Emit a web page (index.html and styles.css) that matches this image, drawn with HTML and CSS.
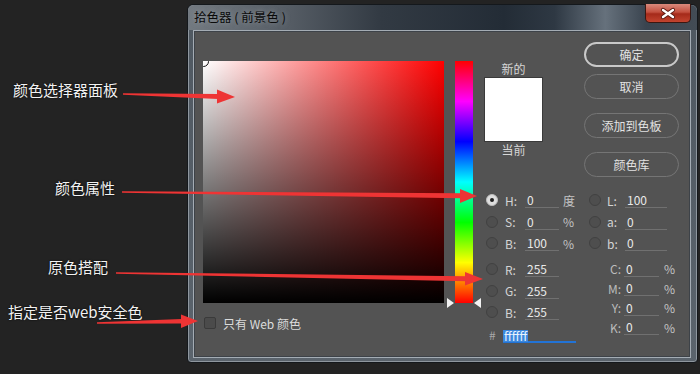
FILE: index.html
```html
<!DOCTYPE html>
<html>
<head>
    <meta charset="utf-8">
    <title>拾色器</title>
    <link rel="stylesheet" href="styles.css">
</head>
<body>
    <div class="dialog">
        <div class="titlebar">
            <span class="title">拾色器 ( 前景色 )</span>
            <div class="close">
                <svg width="46" height="19" viewBox="0 0 46 19">
                    <path d="M18 6 L28 13 M28 6 L18 13" stroke="#5a1a12" stroke-width="4.2" stroke-linecap="round" />
                    <path d="M18 6 L28 13 M28 6 L18 13" stroke="#ffffff" stroke-width="2.4" stroke-linecap="round" />
                </svg>
            </div>
        </div>

        <div class="panel">
            <!-- colour field -->
            <div class="field-col">
                <div class="field">
                    <div class="picker"></div>
                </div>
                <div class="webonly">
                    <span class="checkbox"></span>
                    <span>只有 Web 颜色</span>
                </div>
            </div>

            <div class="hue"></div>

            <div class="side">
                <div class="side-top">
                    <div class="swatch-col">
                        <div class="swatch-label">新的</div>
                        <div class="swatch"></div>
                        <div class="swatch-label">当前</div>
                    </div>
                    <div class="buttons">
                        <div class="btn btn-main">确定</div>
                        <div class="btn">取消</div>
                        <div class="btn btn-far">添加到色板</div>
                        <div class="btn btn-far">颜色库</div>
                    </div>
                </div>

                <div class="fields">
                    <div class="col-a">
                        <div class="row"><span class="radio on"></span><span class="lbl">H:</span><span class="inp">0</span><span class="unit">度</span></div>
                        <div class="row"><span class="radio"></span><span class="lbl">S:</span><span class="inp">0</span><span class="unit">%</span></div>
                        <div class="row"><span class="radio"></span><span class="lbl">B:</span><span class="inp">100</span><span class="unit">%</span></div>
                        <div class="row group"><span class="radio"></span><span class="lbl">R:</span><span class="inp">255</span></div>
                        <div class="row"><span class="radio"></span><span class="lbl">G:</span><span class="inp">255</span></div>
                        <div class="row"><span class="radio"></span><span class="lbl">B:</span><span class="inp">255</span></div>
                        <div class="row hexrow"><span class="hash">#</span><span class="hex"><span class="sel">ffffff</span></span></div>
                    </div>
                    <div class="col-b">
                        <div class="row"><span class="radio"></span><span class="lbl">L:</span><span class="inp wide">100</span></div>
                        <div class="row"><span class="radio"></span><span class="lbl">a:</span><span class="inp wide">0</span></div>
                        <div class="row"><span class="radio"></span><span class="lbl">b:</span><span class="inp wide">0</span></div>
                        <div class="crow group"><span class="clbl">C:</span><span class="inp">0</span><span class="unit">%</span></div>
                        <div class="crow"><span class="clbl">M:</span><span class="inp">0</span><span class="unit">%</span></div>
                        <div class="crow"><span class="clbl">Y:</span><span class="inp">0</span><span class="unit">%</span></div>
                        <div class="crow"><span class="clbl">K:</span><span class="inp">0</span><span class="unit">%</span></div>
                    </div>
                </div>
            </div>
        </div>
    </div>

    <!-- annotations -->
    <div class="note note1">颜色选择器面板</div>
    <div class="note note2">颜色属性</div>
    <div class="note note3">原色搭配</div>
    <div class="note note4">指定是否web安全色</div>

    <svg class="arrows" width="700" height="374" viewBox="0 0 700 374">
        <g fill="#ee3434">
            <polygon points="123,93.3 218,94 218,99 123,94.7" />
            <polygon points="217,89.5 235,97 217,103.5" />
            <polygon points="122,191.3 461,193.3 461,198.3 122,192.7" />
            <polygon points="460,189 477,196 460,203" />
            <polygon points="116,272.3 466,276.2 466,281.2 116,273.7" />
            <polygon points="465,272 483,279 465,285.5" />
            <polygon points="97,322.3 182,319 182,323.6 97,323.7" />
            <polygon points="181,314.5 198,321 181,328" />
        </g>
    </svg>
</body>
</html>
```

FILE: styles.css
```css
body {
    margin: 0;
    background-color: #232323;
    font-family: "Noto Sans CJK SC", "Liberation Sans", sans-serif;
    font-size: 12px;
    width: 700px;
    height: 374px;
    overflow: hidden;
    position: relative;
}

.dialog {
    margin: 4px 0 0 187px;
    width: 509px;
    height: 357px;
    border: 1px solid #14181c;
    border-radius: 6px 6px 4px 4px;
    background: linear-gradient(to bottom, #4f5861, #5b646d);
    box-shadow: inset 0 0 0 1px #8f979f;
}

.titlebar {
    height: 25px;
    display: flex;
    align-items: flex-start;
    border-radius: 6px 6px 0 0;
    background: linear-gradient(to right, #737a81 0%, #596068 18%, #323a43 38%, #232c36 62%, #2e3843 72%, #66717c 82%, #3a444f 90%, #434c55 100%);
}

.title {
    margin: 4px 0 0 6px;
    color: #0a0a0a;
    font-size: 12.5px;
    line-height: 16px;
    text-shadow: 0 0 5px rgba(200, 206, 212, 0.5);
}

.close {
    margin: -1px 6px 0 auto;
    width: 46px;
    height: 19px;
    border: 1px solid #3b1711;
    border-top: none;
    border-radius: 0 0 5px 5px;
    box-sizing: border-box;
    background: linear-gradient(to bottom, #d98a7c 0%, #c3503f 45%, #a52a1a 55%, #c2442f 100%);
}

.close svg {
    display: block;
    margin-left: -1px;
}

.panel {
    margin: 0 6px 0 5px;
    background-color: #535353;
    border: 1px solid #a4acb4;
    box-shadow: inset 0 0 0 1px #3d4248;
    display: flex;
    align-items: flex-start;
    padding: 11px 0 0 9px;
    height: 315px;
}

.field-col {
    margin-top: 19px;
}

.field {
    width: 241px;
    height: 242px;
    position: relative;
    overflow: hidden;
    background: linear-gradient(to bottom, rgba(0, 0, 0, 0), #000), linear-gradient(to right, #ffffff, #ff0000);
}

.picker {
    position: absolute;
    left: -5px;
    top: -5px;
    width: 9px;
    height: 9px;
    border: 1px solid #111;
    border-radius: 50%;
}

.webonly {
    margin-top: 14px;
    display: flex;
    align-items: center;
    height: 12px;
    color: #dcdcdc;
}

.checkbox {
    width: 10px;
    height: 10px;
    margin: 0 7px 0 1px;
    border: 1px solid #3a3a3a;
    border-radius: 2px;
    background-color: #4b4b4b;
}

.hue {
    margin: 19px 0 0 11px;
    width: 18px;
    height: 242px;
    position: relative;
    background: linear-gradient(to bottom, #ff0000 0%, #ff00ff 16.7%, #0000ff 33.3%, #00ffff 50%, #00ff00 66.7%, #ffff00 83.3%, #ff0000 100%);
}

.hue::before,
.hue::after {
    content: "";
    position: absolute;
    top: 237px;
    width: 7px;
    height: 10px;
    background-color: #f2f2f2;
}

.hue::before {
    left: -8px;
    clip-path: polygon(0 0, 100% 50%, 0 100%);
}

.hue::after {
    right: -8px;
    clip-path: polygon(100% 0, 0 50%, 100% 100%);
}

.side {
    margin-left: 11px;
    width: 206px;
}

.side-top {
    display: flex;
    align-items: flex-start;
}

.swatch-col {
    margin-top: 19px;
    width: 59px;
}

.swatch-label {
    text-align: center;
    line-height: 16px;
    color: #d6d6d6;
}

.swatch {
    height: 63px;
    border: 1px solid #3a3a3a;
    background-color: #ffffff;
}

.buttons {
    margin-left: 41px;
    width: 95px;
}

.btn {
    height: 25px;
    box-sizing: border-box;
    border: 1px solid #757575;
    border-radius: 13px;
    color: #e2e2e2;
    text-align: center;
    line-height: 23px;
    margin-top: 7px;
}

.btn-main {
    margin-top: 0;
    border: 2px solid #c9c9c9;
    line-height: 21px;
}

.btn-far {
    margin-top: 14px;
}

.fields {
    margin-top: 12.5px;
    display: flex;
}

.col-a {
    width: 104px;
}

.row {
    height: 21.6px;
    display: flex;
    align-items: center;
}

.group {
    margin-top: 4px;
}

.radio {
    width: 10px;
    height: 10px;
    margin-left: 2px;
    border: 1px solid #414141;
    border-radius: 50%;
    background-color: #4e4e4e;
    position: relative;
}

.radio.on {
    background-color: #dedede;
    border-color: #bdbdbd;
}

.radio.on::after {
    content: "";
    position: absolute;
    left: 3px;
    top: 3px;
    width: 4px;
    height: 4px;
    border-radius: 50%;
    background-color: #1e1e1e;
}

.lbl {
    margin-left: 7px;
    width: 20px;
    color: #d4d4d4;
}

.inp {
    width: 32px;
    height: 15px;
    line-height: 15px;
    padding-left: 2px;
    border-bottom: 1px solid #707070;
    color: #e9e9e9;
}

.inp.wide {
    width: 40px;
}

.unit {
    margin-left: 4px;
    color: #c4c4c4;
}

.col-b .radio {
    margin-left: 1px;
}

.col-b .lbl {
    margin-left: 6px;
    width: 18px;
}

.crow {
    height: 19.4px;
    display: flex;
    align-items: center;
}

.crow.group {
    margin-top: 5px;
}

.clbl {
    width: 33px;
    padding-right: 3px;
    text-align: right;
    color: #bcbcbc;
}

.crow .inp {
    width: 33px;
}

.crow .unit {
    margin-left: 5px;
}

.hexrow {
    margin-top: 1px;
}

.hash {
    margin-left: 5px;
    width: 14px;
    color: #a9a9a9;
}

.hex {
    width: 73px;
    height: 14px;
    border-bottom: 2px solid #2273d6;
}

.sel {
    display: inline-block;
    height: 12px;
    line-height: 12px;
    padding: 0 1px;
    background-color: #3b87dc;
    color: #e6f2ff;
}

.note {
    position: absolute;
    color: #f2f2f2;
    font-size: 15px;
    line-height: 20px;
    text-shadow: 0 0 2px #000;
}

.note1 {
    left: 13px;
    top: 80px;
}

.note2 {
    left: 55px;
    top: 178px;
}

.note3 {
    left: 48px;
    top: 257px;
}

.note4 {
    left: 8px;
    top: 302px;
}

.arrows {
    position: absolute;
    left: 0;
    top: 0;
    pointer-events: none;
}
```
